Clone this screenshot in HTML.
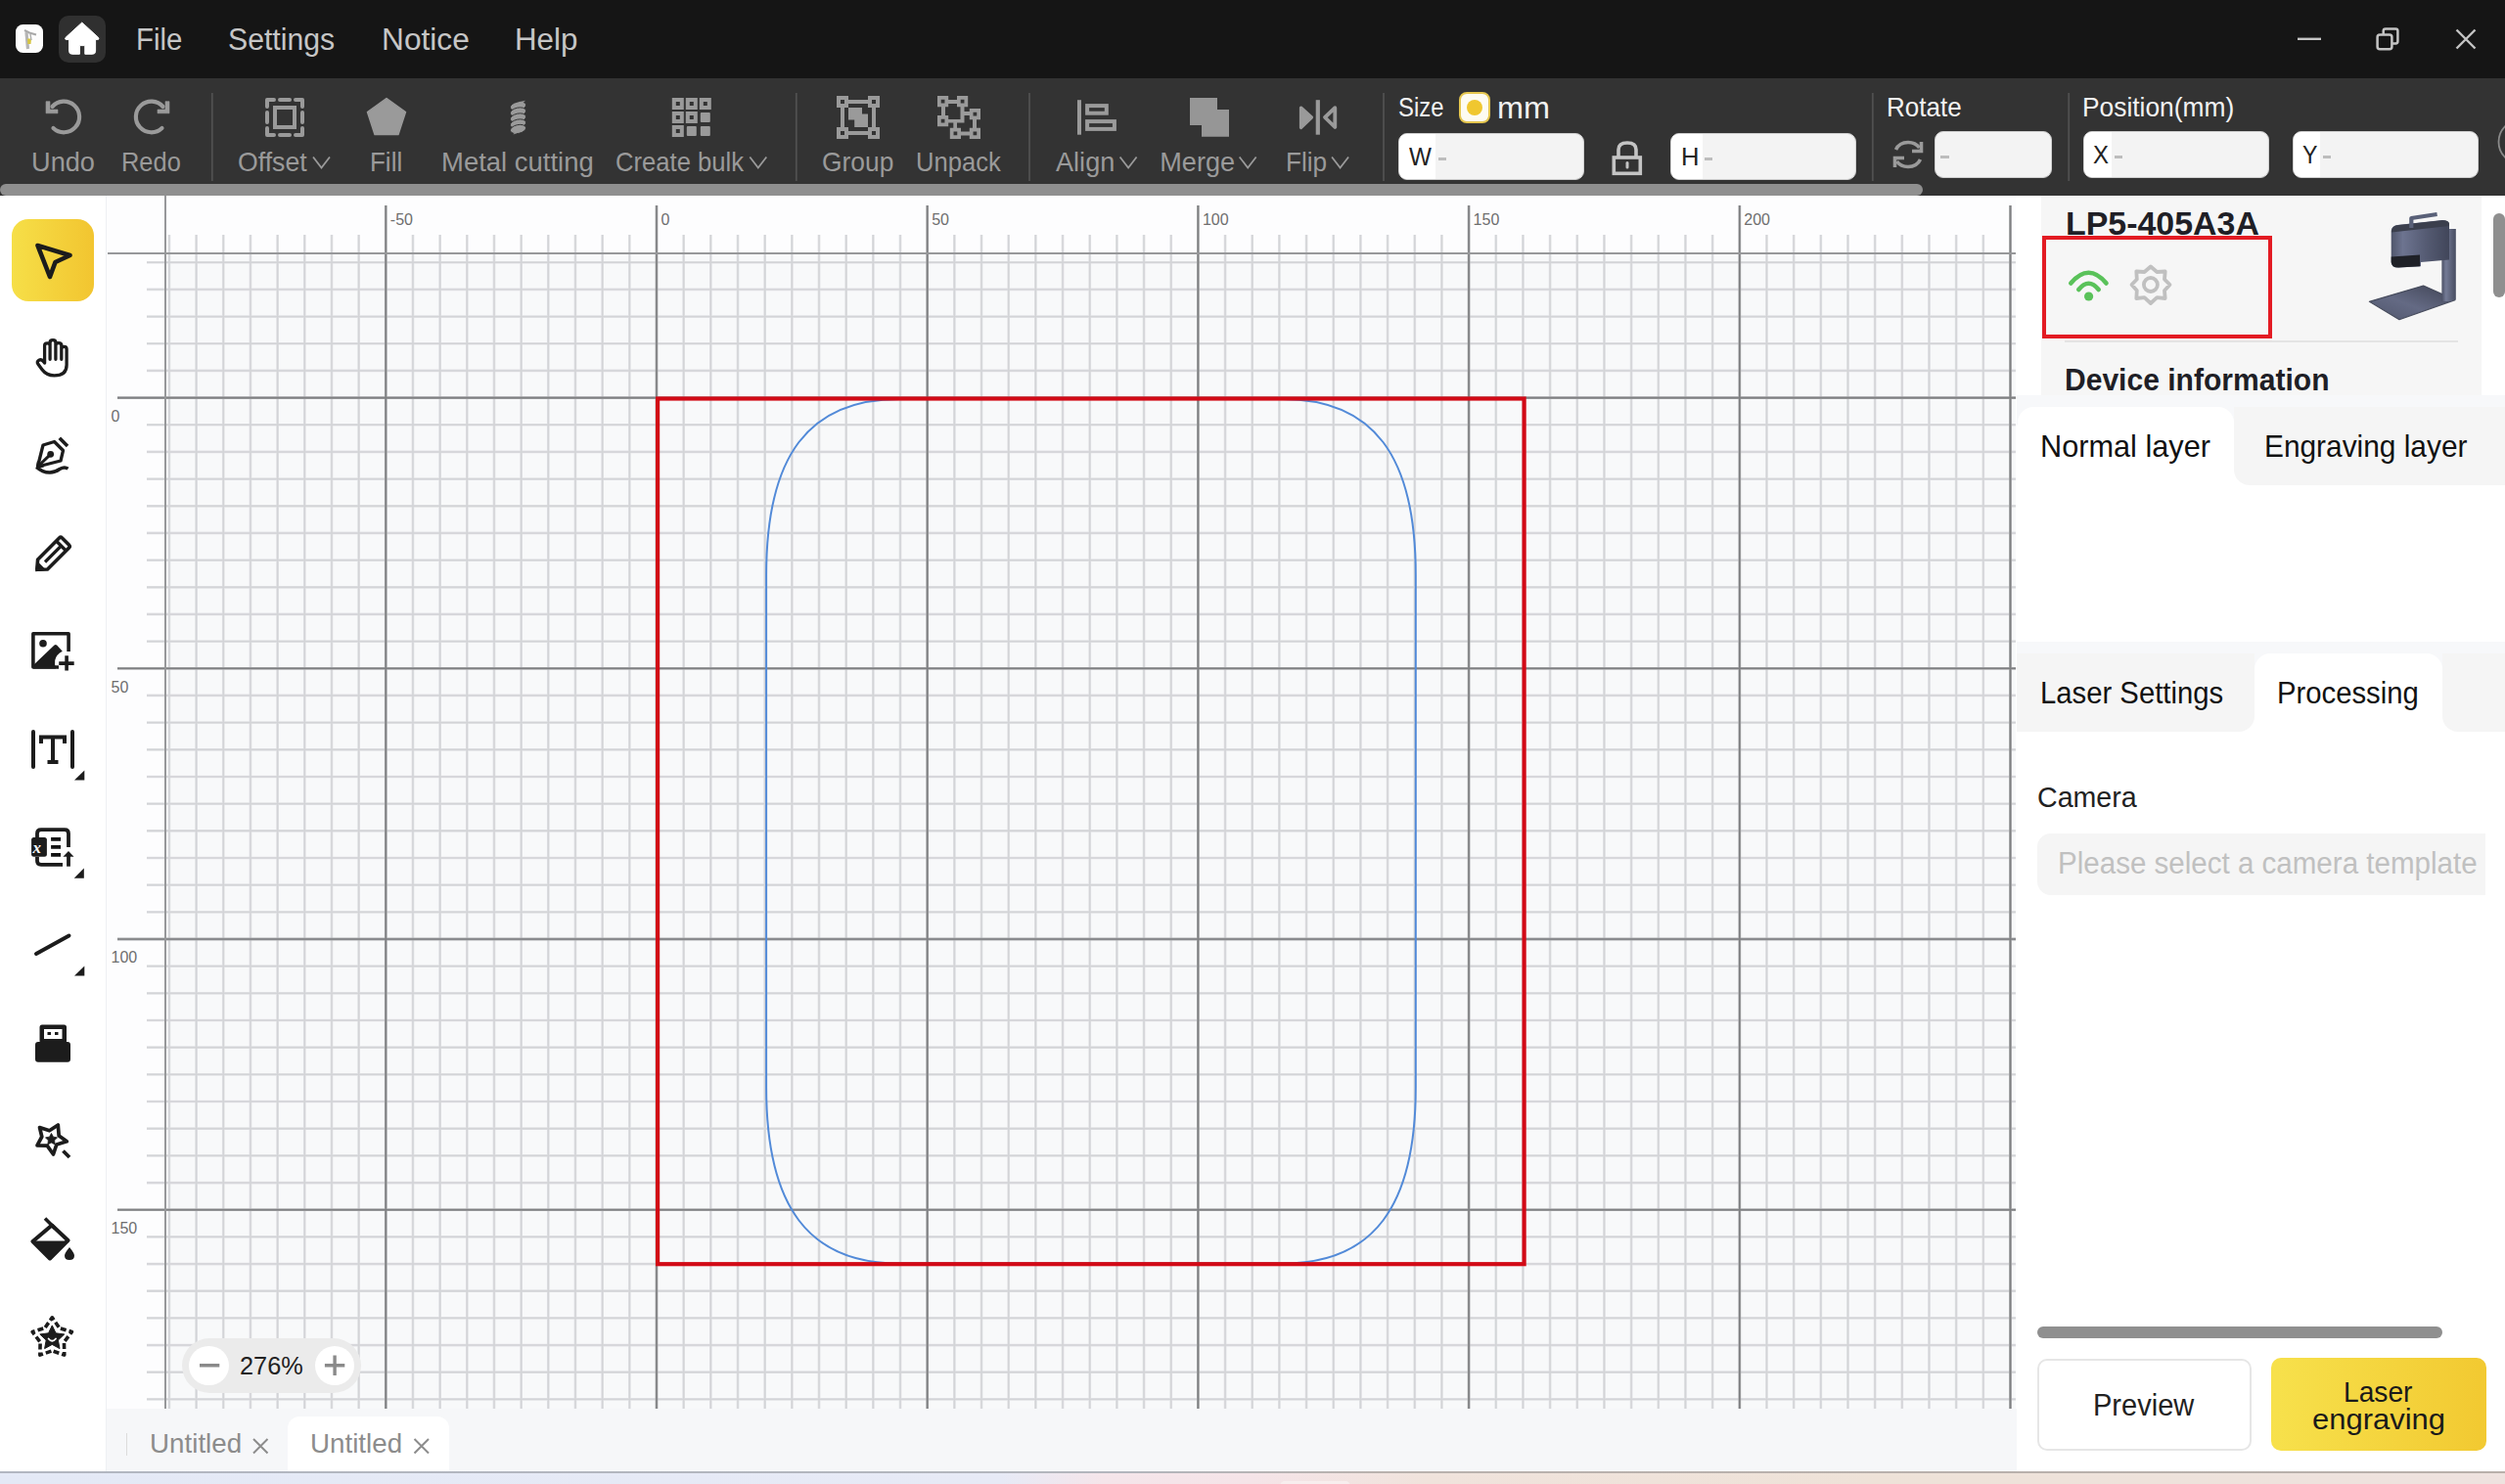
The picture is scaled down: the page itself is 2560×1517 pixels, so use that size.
<!DOCTYPE html><html><head><meta charset="utf-8"><style>
html,body{margin:0;padding:0;width:2560px;height:1517px;overflow:hidden;background:#fff;font-family:"Liberation Sans",sans-serif}
.abs{position:absolute;display:block}
.t{position:absolute;white-space:nowrap;transform-origin:0 0}
.box{position:absolute;box-sizing:border-box}
</style></head><body>
<div class="box" style="left:0;top:0;width:2560px;height:80px;background:#151515"></div>
<div class="abs" style="left:15.6px;top:25.3px;width:28.6px;height:29.1px;border-radius:7.5px;background:#fdfdfd"></div>
<svg class="abs" style="left:15px;top:25px" width="30" height="30" viewBox="15 25 30 30"><path d="M25 31L30 33.5L37 35.5" stroke="#a8a8a8" stroke-width="2.2" fill="none"/><path d="M27 33L28.5 50" stroke="#b5b5b5" stroke-width="3.2"/><path d="M28 39.5H32L31.5 45H28.3Z" fill="#d6c542"/><path d="M31 35L32 41" stroke="#b0b0b0" stroke-width="1.5"/></svg>
<div class="abs" style="left:59.8px;top:15.9px;width:48px;height:48.3px;border-radius:10px;background:#303030"></div>
<svg class="abs" style="left:60px;top:16px" width="48" height="48" viewBox="60 16 48 48"><path d="M83.8 23L100.5 38.3Q102 40.5 99.5 40.5H97.6V52.3Q97.6 55.3 94.6 55.3H86.8V46.6H81.4V55.3H73.6Q70.6 55.3 70.6 52.3V40.5H68.1Q65.6 40.5 67.1 38.3Z" fill="#ffffff" stroke="#fff" stroke-width="1" stroke-linejoin="round"/></svg>
<svg class="abs" style="left:2340px;top:20px" width="200" height="40" viewBox="2340 20 200 40"><path d="M2348 39.8H2372" stroke="#c4c4c4" stroke-width="2.4"/><path d="M2435.7 35V31.6Q2435.7 29.4 2437.9 29.4H2448.2Q2450.4 29.4 2450.4 31.6V42.3Q2450.4 44.5 2448.2 44.5H2444.5" stroke="#c4c4c4" stroke-width="2.5" fill="none"/><rect x="2429.6" y="35.5" width="14.8" height="14.8" rx="2.5" stroke="#c4c4c4" stroke-width="2.5" fill="none"/><path d="M2510.5 30.5L2529.5 49.5M2529.5 30.5L2510.5 49.5" stroke="#c4c4c4" stroke-width="2.4"/></svg>
<div class="t" style="left:139.17px;top:26.00px;font-size:30.87px;line-height:30.87px;color:#c6c6c6;transform:scaleX(0.9533);">File</div>
<div class="t" style="left:233.44px;top:26.00px;font-size:30.87px;line-height:30.87px;color:#c6c6c6;transform:scaleX(0.9794);">Settings</div>
<div class="t" style="left:389.89px;top:26.00px;font-size:30.87px;line-height:30.87px;color:#c6c6c6;transform:scaleX(1.0266);">Notice</div>
<div class="t" style="left:525.62px;top:26.00px;font-size:30.87px;line-height:30.87px;color:#c6c6c6;transform:scaleX(1.0142);">Help</div>
<div class="box" style="left:0;top:80px;width:2560px;height:120px;background:#333333"></div>
<div class="box" style="left:0;top:188px;width:1965px;height:12px;border-radius:6px;background:#8f8f8f"></div>
<div class="box" style="left:1429px;top:135.9px;width:189.79999999999995px;height:47.900000000000006px;border-radius:9px;background:#f3f3f3;border:1.5px solid #cfcfcf;overflow:hidden"><div class="box" style="left:0;top:0;width:37.40000000000009px;height:100%;background:#fff"></div></div>
<div class="box" style="left:1707.2px;top:135.9px;width:189.79999999999995px;height:47.900000000000006px;border-radius:9px;background:#f3f3f3;border:1.5px solid #cfcfcf;overflow:hidden"><div class="box" style="left:0;top:0;width:31.399999999999864px;height:100%;background:#fff"></div></div>
<div class="box" style="left:1976.6px;top:134.1px;width:120.20000000000027px;height:47.900000000000006px;border-radius:9px;background:#f3f3f3;border:1.5px solid #cfcfcf;overflow:hidden"></div>
<div class="box" style="left:2128.9px;top:133.8px;width:189.79999999999973px;height:48.0px;border-radius:9px;background:#f3f3f3;border:1.5px solid #cfcfcf;overflow:hidden"><div class="box" style="left:0;top:0;width:28.5px;height:100%;background:#fff"></div></div>
<div class="box" style="left:2343px;top:133.8px;width:190px;height:48.0px;border-radius:9px;background:#f3f3f3;border:1.5px solid #cfcfcf;overflow:hidden"><div class="box" style="left:0;top:0;width:27.40000000000009px;height:100%;background:#fff"></div></div>
<svg class="abs" style="left:0;top:0" width="2560" height="200" viewBox="0 0 2560 200"><path d="M54.5 131A15.8 15.8 0 1 0 53.5 109" stroke="#9a9a9a" stroke-width="4.2" fill="none" stroke-linecap="round"/><path d="M47 103.7H51V112H59V115.8H47Z" fill="#9a9a9a" stroke="#9a9a9a" stroke-width="0.6" stroke-linejoin="round"/><path d="M165.5 131A15.8 15.8 0 1 1 166.5 109" stroke="#9a9a9a" stroke-width="4.2" fill="none" stroke-linecap="round"/><path d="M173 103.7H169V112H161V115.8H173Z" fill="#9a9a9a" stroke="#9a9a9a" stroke-width="0.6" stroke-linejoin="round"/><path d="M273 109V102H280M302 102H309V109M309 131V138H302M280 138H273V131M286 102H296M286 138H296M273 115V125M309 115V125" stroke="#9a9a9a" stroke-width="4" fill="none" stroke-linecap="round" stroke-linejoin="round"/><rect x="281" y="110" width="20" height="20" stroke="#9a9a9a" stroke-width="4" fill="none"/><path d="M395 100.5L414.5 114.5L407 137.5H383L375.5 114.5Z" fill="#9a9a9a" stroke="#9a9a9a" stroke-width="1.5" stroke-linejoin="round"/><ellipse cx="529.5" cy="108.5" rx="8.2" ry="4.4" transform="rotate(-12 529.5 108.5)" fill="#9a9a9a" stroke="#323232" stroke-width="0.9"/><ellipse cx="529.5" cy="114.5" rx="8.2" ry="4.4" transform="rotate(-12 529.5 114.5)" fill="#9a9a9a" stroke="#323232" stroke-width="0.9"/><ellipse cx="529.5" cy="120.5" rx="8.2" ry="4.4" transform="rotate(-12 529.5 120.5)" fill="#9a9a9a" stroke="#323232" stroke-width="0.9"/><ellipse cx="529.5" cy="126.5" rx="8.2" ry="4.4" transform="rotate(-12 529.5 126.5)" fill="#9a9a9a" stroke="#323232" stroke-width="0.9"/><ellipse cx="529.5" cy="132" rx="8.2" ry="4.4" transform="rotate(-12 529.5 132)" fill="#9a9a9a" stroke="#323232" stroke-width="0.9"/><path d="M529 104.5L537 102.8L533.5 106Z" fill="#9a9a9a"/><path d="M530 135.5L524.5 137.5L527 134Z" fill="#9a9a9a"/><path d="M686.8 99.9h12v12h-12zM690.8 103.9v4h4v-4z" fill="#9a9a9a" fill-rule="evenodd"/><path d="M686.8 113.9h12v12h-12zM690.8 117.9v4h4v-4z" fill="#9a9a9a" fill-rule="evenodd"/><path d="M686.8 127.9h12v12h-12zM690.8 131.9v4h4v-4z" fill="#9a9a9a" fill-rule="evenodd"/><path d="M700.8 99.9h12v12h-12zM704.8 103.9v4h4v-4z" fill="#9a9a9a" fill-rule="evenodd"/><path d="M700.8 113.9h12v12h-12zM704.8 117.9v4h4v-4z" fill="#9a9a9a" fill-rule="evenodd"/><rect x="701.8" y="128.9" width="10" height="10" rx="1" fill="#9a9a9a"/><path d="M714.8 99.9h12v12h-12zM718.8 103.9v4h4v-4z" fill="#9a9a9a" fill-rule="evenodd"/><rect x="715.8" y="114.9" width="10" height="10" rx="1" fill="#9a9a9a"/><rect x="715.8" y="128.9" width="10" height="10" rx="1" fill="#9a9a9a"/><path d="M855 98h12v12h-12zM859.00 102.00v4.00h4.00v-4.00zM887 98h12v12h-12zM891.00 102.00v4.00h4.00v-4.00zM855 130h12v12h-12zM859.00 134.00v4.00h4.00v-4.00zM887 130h12v12h-12zM891.00 134.00v4.00h4.00v-4.00z" fill="#9a9a9a" fill-rule="evenodd"/><path d="M867 102H887V106H867ZM867 134H887V138H867ZM859 110H863V130H859ZM891 110H895V130H891Z" fill="#9a9a9a"/><path d="M867 110H881V116.5H887V130H873.2V122.6H867Z" fill="#9a9a9a"/><path d="M958 98h11.2v11.2h-11.2zM961.73 101.73v3.73h3.73v-3.73zM978 98h11.2v11.2h-11.2zM981.73 101.73v3.73h3.73v-3.73zM958 118h11.2v11.2h-11.2zM961.73 121.73v3.73h3.73v-3.73zM990.8 111h11.2v11.2h-11.2zM994.53 114.73v3.73h3.73v-3.73zM970.8 130.8h11.2v11.2h-11.2zM974.53 134.53v3.73h3.73v-3.73zM990.8 130.8h11.2v11.2h-11.2zM994.53 134.53v3.73h3.73v-3.73z" fill="#9a9a9a" fill-rule="evenodd"/><path d="M969 102H978V106H969ZM962 109H966V118H962ZM981.5 109H985.5V125.5H981.5ZM969 122H985.5V125.5H969ZM985.5 114H991V118H985.5ZM994 122H998V131H994ZM982 134.5H991V138.5H982ZM974.3 125.5H978V131H974.3Z" fill="#9a9a9a"/><rect x="1101" y="102.2" width="4" height="35.5" fill="#9a9a9a"/><rect x="1111.1" y="108.1" width="19.7" height="7.6" stroke="#9a9a9a" stroke-width="4" fill="none"/><rect x="1111.1" y="124.1" width="27.8" height="7.8" stroke="#9a9a9a" stroke-width="4" fill="none"/><path d="M1216 100H1244V112H1256V139.7H1228V128H1216Z" fill="#969696"/><path d="M1329.5 110L1340.5 120L1329.5 130.5Z" fill="#9a9a9a" stroke="#9a9a9a" stroke-width="3.2" stroke-linejoin="round"/><path d="M1346.8 102.2V137.7" stroke="#9a9a9a" stroke-width="4.2"/><path d="M1364.3 110.2L1354 120L1364.3 130Z" fill="none" stroke="#9a9a9a" stroke-width="3.8" stroke-linejoin="round"/><path d="M320 160.5L328.5 171.5L337 160.5" stroke="#9a9a9a" stroke-width="1.8" fill="none"/><path d="M766.3 160.5L774.8 171.5L783.3 160.5" stroke="#9a9a9a" stroke-width="1.8" fill="none"/><path d="M1144.6 160.5L1153.1 171.5L1161.6 160.5" stroke="#9a9a9a" stroke-width="1.8" fill="none"/><path d="M1266.7 160.5L1275.2 171.5L1283.7 160.5" stroke="#9a9a9a" stroke-width="1.8" fill="none"/><path d="M1361.1 160.5L1369.6 171.5L1378.1 160.5" stroke="#9a9a9a" stroke-width="1.8" fill="none"/><path d="M1654 160V153Q1654 146 1663 146Q1672 146 1672 153V160" stroke="#c4c4c4" stroke-width="3.6" fill="none"/><rect x="1649.3" y="161" width="27" height="16.3" stroke="#c4c4c4" stroke-width="3.6" fill="none"/><path d="M1663 166.5V171" stroke="#c4c4c4" stroke-width="3" stroke-linecap="round"/><path d="M1937.5 153Q1941 145.5 1950 145.5Q1957.5 145.5 1961.5 151" stroke="#9a9a9a" stroke-width="3.6" fill="none"/><path d="M1963.5 145V154.5H1954" stroke="#9a9a9a" stroke-width="3.6" fill="none"/><path d="M1962.5 163Q1959 170.5 1950 170.5Q1942.5 170.5 1938.5 165" stroke="#9a9a9a" stroke-width="3.6" fill="none"/><path d="M1936.5 171V161.5H1946" stroke="#9a9a9a" stroke-width="3.6" fill="none"/><path d="M216.8 95V185M813.8 95V185M1052 95V185M1414 95V185M1913.8 95V185M2114.2 95V185" stroke="#505050" stroke-width="1.8"/><circle cx="2576" cy="145" r="22.5" stroke="#8a8a8a" stroke-width="1.8" fill="none"/></svg>
<div class="t" style="left:32.29px;top:152.00px;font-size:27.10px;line-height:27.10px;color:#9a9a9a;transform:scaleX(1.0034);">Undo</div>
<div class="t" style="left:124.30px;top:152.00px;font-size:27.10px;line-height:27.10px;color:#9a9a9a;transform:scaleX(0.9389);">Redo</div>
<div class="t" style="left:243.33px;top:152.00px;font-size:27.10px;line-height:27.10px;color:#9a9a9a;transform:scaleX(0.9840);">Offset</div>
<div class="t" style="left:378.16px;top:152.00px;font-size:27.10px;line-height:27.10px;color:#9a9a9a;transform:scaleX(0.9589);">Fill</div>
<div class="t" style="left:450.73px;top:152.00px;font-size:27.10px;line-height:27.10px;color:#9a9a9a;transform:scaleX(1.0136);">Metal cutting</div>
<div class="t" style="left:629.32px;top:152.00px;font-size:27.10px;line-height:27.10px;color:#9a9a9a;transform:scaleX(0.9456);">Create bulk</div>
<div class="t" style="left:839.88px;top:152.00px;font-size:27.10px;line-height:27.10px;color:#9a9a9a;transform:scaleX(0.9734);">Group</div>
<div class="t" style="left:936.02px;top:152.00px;font-size:27.10px;line-height:27.10px;color:#9a9a9a;transform:scaleX(0.9446);">Unpack</div>
<div class="t" style="left:1079.03px;top:152.00px;font-size:27.10px;line-height:27.10px;color:#9a9a9a;">Align</div>
<div class="t" style="left:1185.26px;top:152.00px;font-size:27.10px;line-height:27.10px;color:#9a9a9a;">Merge</div>
<div class="t" style="left:1314.04px;top:152.00px;font-size:27.10px;line-height:27.10px;color:#9a9a9a;transform:scaleX(0.9649);">Flip</div>
<div class="t" style="left:1429.13px;top:96.00px;font-size:27.25px;line-height:27.25px;color:#f2f2f2;transform:scaleX(0.8753);">Size</div>
<div class="t" style="left:1530.41px;top:95.00px;font-size:31.00px;line-height:31.00px;color:#f2f2f2;transform:scaleX(1.0462);">mm</div>
<div class="t" style="left:1928.36px;top:96.00px;font-size:27.25px;line-height:27.25px;color:#f2f2f2;transform:scaleX(0.9540);">Rotate</div>
<div class="t" style="left:2127.93px;top:96.00px;font-size:27.25px;line-height:27.25px;color:#f2f2f2;transform:scaleX(0.9668);">Position(mm)</div>
<div class="box" style="left:1491px;top:94px;width:32px;height:32px;border-radius:8px;background:#fdfbf2;border:2px solid #e6c750"></div>
<div class="box" style="left:1499px;top:102px;width:16px;height:16px;border-radius:8px;background:#f0c72f"></div>
<div class="t" style="left:1440.28px;top:148.00px;font-size:25.07px;line-height:25.07px;color:#222;transform:scaleX(0.9683);">W</div>
<div class="t" style="left:1717.68px;top:148.00px;font-size:25.07px;line-height:25.07px;color:#222;transform:scaleX(1.0230);">H</div>
<div class="t" style="left:2139.06px;top:146.00px;font-size:25.07px;line-height:25.07px;color:#222;transform:scaleX(0.9547);">X</div>
<div class="t" style="left:2352.88px;top:146.00px;font-size:25.07px;line-height:25.07px;color:#222;transform:scaleX(0.9226);">Y</div>
<div class="box" style="left:1470px;top:161.3px;width:8.299999999999955px;height:2.4px;background:#bdbdbd"></div>
<div class="box" style="left:1741.9px;top:161.3px;width:8.399999999999864px;height:2.4px;background:#bdbdbd"></div>
<div class="box" style="left:1983.2px;top:159.3px;width:9.0px;height:2.4px;background:#bdbdbd"></div>
<div class="box" style="left:2161.2px;top:159.20000000000002px;width:8.100000000000364px;height:2.4px;background:#bdbdbd"></div>
<div class="box" style="left:2373.7px;top:159.20000000000002px;width:8.800000000000182px;height:2.4px;background:#bdbdbd"></div>
<div class="box" style="left:0;top:200px;width:109px;height:1304px;background:#fff;border-right:1px solid #eef0f3"></div>
<svg class="abs" style="left:0;top:200px" width="108" height="1304" viewBox="0 200 108 1304"><defs><linearGradient id="yg" x1="0" x2="1" y1="0" y2="0"><stop offset="0" stop-color="#f6df48"/><stop offset="1" stop-color="#f2c530"/></linearGradient></defs><rect x="12" y="224" width="84" height="84" rx="17" fill="url(#yg)"/><path d="M38.5 251L71.5 261L56.5 268L51 283Z" stroke="#1c1c1c" stroke-width="4.6" fill="none" stroke-linejoin="round"/><path d="M45.6 371V353.3Q45.6 350.8 48.35 350.8Q51.1 350.8 51.1 353.3V367.3M51.1 353V350.2Q51.1 347.7 54 347.7Q56.9 347.7 56.9 350.2V367.3M56.9 353Q56.9 350.6 59.85 350.6Q62.8 350.6 62.8 353V367.3M62.8 357Q62.8 354.4 65.45 354.4Q68.1 354.4 68.1 357V373Q68.1 383.9 55.5 383.9Q47.5 383.9 42.8 377.5L38.8 372Q37.3 369.5 39.8 368.2Q42.2 367 44 369.2L45.6 371" stroke="#1c1c1c" stroke-width="3.3" fill="none" stroke-linecap="round" stroke-linejoin="round"/><path d="M38.5 477L44 455L55.5 451.5L64.5 460.5L62 471Z" stroke="#1c1c1c" stroke-width="3.3" fill="none" stroke-linejoin="round"/><path d="M38.5 477L51.7 464.3" stroke="#1c1c1c" stroke-width="3"/><circle cx="51.7" cy="464.3" r="3.4" fill="#1c1c1c"/><path d="M36.5 479.5L38 471L45 477.5Z" fill="#1c1c1c"/><path d="M60.8 447.8L69 456" stroke="#1c1c1c" stroke-width="3.6"/><path d="M37.5 477.5Q43 483 51 483Q56 483 61 479.5Q66 476.5 69.5 479.2" stroke="#1c1c1c" stroke-width="3.4" fill="none"/><path d="M37.8 582.2L38.6 572L60.5 550Q62 548.5 63.5 550L70.5 557Q72 558.5 70.5 560L48.5 582Z" stroke="#1c1c1c" stroke-width="3.6" fill="none" stroke-linejoin="round"/><path d="M57.5 553L67.5 563" stroke="#1c1c1c" stroke-width="3.4"/><path d="M46 574.5L61.5 559" stroke="#1c1c1c" stroke-width="3.2"/><path d="M36.2 584.2L37.5 573L47.5 583Z" fill="#1c1c1c"/><path d="M60 682H33.9V647.7H70.1V666" stroke="#1c1c1c" stroke-width="3.6" fill="none" stroke-linejoin="round"/><circle cx="44" cy="657.8" r="3.8" fill="#1c1c1c"/><path d="M34 680L55.5 659.6Q56.8 658.4 58.1 659.6L63.8 665.8Q57.5 669 56.2 675Q55.6 679 57 683.5H34Z" fill="#1c1c1c"/><path d="M68.1 670.2V685.5M60.2 678.1H75.7" stroke="#1c1c1c" stroke-width="3.6"/><path d="M34 748V784M74 748V784" stroke="#1c1c1c" stroke-width="4" stroke-linecap="round"/><path d="M42 760V753.5H66V760M54 753.5V779M48.5 779H59.5" stroke="#1c1c1c" stroke-width="4" fill="none"/><path d="M76 797.5L86.3 787.5V797.5Z" fill="#1c1c1c"/><path d="M38 856V852Q38 848.1 42 848.1H66Q70 848.1 70 852V866M38 876V880Q38 883.8 42 883.8H64" stroke="#1c1c1c" stroke-width="3.8" fill="none"/><rect x="32.1" y="856" width="15.8" height="19.8" rx="2.5" fill="#1c1c1c"/><text x="33.6" y="871.5" style="font-family:&quot;Liberation Serif&quot;,serif;font-style:italic;font-weight:bold;font-size:17px" fill="#fff">x</text><path d="M52.1 857.9H62M52.1 865.9H62M52.1 873.9H62" stroke="#111" stroke-width="3.6"/><path d="M70 885.7V874" stroke="#1c1c1c" stroke-width="3.8"/><path d="M64.4 875.8H75.5L70 870.1Z" fill="#1c1c1c"/><path d="M75.7 897.7L85.8 887.6V897.7Z" fill="#1c1c1c"/><path d="M37 975L70.5 956.5" stroke="#1c1c1c" stroke-width="4" stroke-linecap="round"/><path d="M76 997.5L86.3 987.6V997.5Z" fill="#1c1c1c"/><rect x="40.5" y="1047.5" width="27.5" height="19" rx="2.5" fill="#1c1c1c"/><rect x="45" y="1052" width="18.5" height="10" fill="#fff"/><rect x="48.5" y="1055" width="3.5" height="3" fill="#1c1c1c"/><rect x="56" y="1055" width="3.5" height="3" fill="#1c1c1c"/><rect x="36" y="1065" width="36" height="20.7" rx="3" fill="#1c1c1c"/><path d="M40.5 1152.5L50.5 1155.8L59.3 1150L60.2 1161L68.3 1166.8L57.8 1170L54.5 1180L48.2 1171.2L38 1170.8L42.8 1162Z" stroke="#1c1c1c" stroke-width="3.7" fill="none" stroke-linejoin="round"/><path d="M52.50 1158.50L54.44 1162.13L58.49 1162.85L55.64 1165.82L56.20 1169.90L52.50 1168.10L48.80 1169.90L49.36 1165.82L46.51 1162.85L50.56 1162.13Z" fill="#1c1c1c" stroke="#1c1c1c" stroke-width="0.8"/><path d="M64.5 1176.5L71 1183" stroke="#1c1c1c" stroke-width="3.8"/><path d="M46 1245.5L56 1255.5" stroke="#1c1c1c" stroke-width="3.6"/><path d="M53 1252.5L69.5 1268L51 1286.5L33.5 1269Z" stroke="#1c1c1c" stroke-width="4" fill="none" stroke-linejoin="round"/><path d="M35 1268.5H68.5L51 1286Z" fill="#1c1c1c"/><path d="M71 1275Q76 1281 76 1283.5Q76 1288 71 1288Q66 1288 66 1283.5Q66 1281 71 1275Z" fill="#1c1c1c"/><path d="M53.30 1346.80L60.82 1357.64L73.46 1361.45L65.47 1371.96L65.76 1385.15L53.30 1380.80L40.84 1385.15L41.13 1371.96L33.14 1361.45L45.78 1357.64Z" stroke="#1c1c1c" stroke-width="3.6" fill="none" stroke-dasharray="6 3 6 2.3 6 3" stroke-dashoffset="3" stroke-linejoin="round"/><path d="M53.30 1354.90L57.06 1362.82L65.76 1363.95L59.39 1369.98L61.00 1378.60L53.30 1374.40L45.60 1378.60L47.21 1369.98L40.84 1363.95L49.54 1362.82Z" fill="#1c1c1c" stroke="#1c1c1c" stroke-width="1" stroke-linejoin="round"/><path d="M49.6 1368.5Q53.3 1373 57 1368.5" stroke="#fff" stroke-width="1.8" fill="none" stroke-linecap="round"/></svg>
<svg class="abs" style="left:0;top:0" width="2560" height="1517" viewBox="0 0 2560 1517">
<defs><clipPath id="cc"><rect x="109" y="200" width="1951" height="1240"/></clipPath></defs>
<g clip-path="url(#cc)">
<rect x="109" y="200" width="1951" height="1240" fill="#fdfdfe"/>
<rect x="169" y="259" width="1891" height="1181" fill="#f8f9fa"/>
<path d="M172.94 240V1440M200.61 240V1440M228.28 240V1440M255.95 240V1440M283.62 240V1440M311.29 240V1440M338.96 240V1440M366.63 240V1440M421.97 240V1440M449.64 240V1440M477.31 240V1440M504.98 240V1440M532.65 240V1440M560.32 240V1440M587.99 240V1440M615.66 240V1440M643.33 240V1440M698.67 240V1440M726.34 240V1440M754.01 240V1440M781.68 240V1440M809.35 240V1440M837.02 240V1440M864.69 240V1440M892.36 240V1440M920.03 240V1440M975.37 240V1440M1003.04 240V1440M1030.71 240V1440M1058.38 240V1440M1086.05 240V1440M1113.72 240V1440M1141.39 240V1440M1169.06 240V1440M1196.73 240V1440M1252.07 240V1440M1279.74 240V1440M1307.41 240V1440M1335.08 240V1440M1362.75 240V1440M1390.42 240V1440M1418.09 240V1440M1445.76 240V1440M1473.43 240V1440M1528.77 240V1440M1556.44 240V1440M1584.11 240V1440M1611.78 240V1440M1639.45 240V1440M1667.12 240V1440M1694.79 240V1440M1722.46 240V1440M1750.13 240V1440M1805.47 240V1440M1833.14 240V1440M1860.81 240V1440M1888.48 240V1440M1916.15 240V1440M1943.82 240V1440M1971.49 240V1440M1999.16 240V1440M2026.83 240V1440M150 268.25H2060M150 295.92H2060M150 323.59H2060M150 351.26H2060M150 378.93H2060M150 434.27H2060M150 461.94H2060M150 489.61H2060M150 517.28H2060M150 544.95H2060M150 572.62H2060M150 600.29H2060M150 627.96H2060M150 655.63H2060M150 710.97H2060M150 738.64H2060M150 766.31H2060M150 793.98H2060M150 821.65H2060M150 849.32H2060M150 876.99H2060M150 904.66H2060M150 932.33H2060M150 987.67H2060M150 1015.34H2060M150 1043.01H2060M150 1070.68H2060M150 1098.35H2060M150 1126.02H2060M150 1153.69H2060M150 1181.36H2060M150 1209.03H2060M150 1264.37H2060M150 1292.04H2060M150 1319.71H2060M150 1347.38H2060M150 1375.05H2060M150 1402.72H2060M150 1430.39H2060" stroke="#e1e2e5" stroke-width="2.7" fill="none"/>
<path d="M172.94 240V1440M200.61 240V1440M228.28 240V1440M255.95 240V1440M283.62 240V1440M311.29 240V1440M338.96 240V1440M366.63 240V1440M421.97 240V1440M449.64 240V1440M477.31 240V1440M504.98 240V1440M532.65 240V1440M560.32 240V1440M587.99 240V1440M615.66 240V1440M643.33 240V1440M698.67 240V1440M726.34 240V1440M754.01 240V1440M781.68 240V1440M809.35 240V1440M837.02 240V1440M864.69 240V1440M892.36 240V1440M920.03 240V1440M975.37 240V1440M1003.04 240V1440M1030.71 240V1440M1058.38 240V1440M1086.05 240V1440M1113.72 240V1440M1141.39 240V1440M1169.06 240V1440M1196.73 240V1440M1252.07 240V1440M1279.74 240V1440M1307.41 240V1440M1335.08 240V1440M1362.75 240V1440M1390.42 240V1440M1418.09 240V1440M1445.76 240V1440M1473.43 240V1440M1528.77 240V1440M1556.44 240V1440M1584.11 240V1440M1611.78 240V1440M1639.45 240V1440M1667.12 240V1440M1694.79 240V1440M1722.46 240V1440M1750.13 240V1440M1805.47 240V1440M1833.14 240V1440M1860.81 240V1440M1888.48 240V1440M1916.15 240V1440M1943.82 240V1440M1971.49 240V1440M1999.16 240V1440M2026.83 240V1440M150 268.25H2060M150 295.92H2060M150 323.59H2060M150 351.26H2060M150 378.93H2060M150 434.27H2060M150 461.94H2060M150 489.61H2060M150 517.28H2060M150 544.95H2060M150 572.62H2060M150 600.29H2060M150 627.96H2060M150 655.63H2060M150 710.97H2060M150 738.64H2060M150 766.31H2060M150 793.98H2060M150 821.65H2060M150 849.32H2060M150 876.99H2060M150 904.66H2060M150 932.33H2060M150 987.67H2060M150 1015.34H2060M150 1043.01H2060M150 1070.68H2060M150 1098.35H2060M150 1126.02H2060M150 1153.69H2060M150 1181.36H2060M150 1209.03H2060M150 1264.37H2060M150 1292.04H2060M150 1319.71H2060M150 1347.38H2060M150 1375.05H2060M150 1402.72H2060M150 1430.39H2060" stroke="#d3d4d7" stroke-width="1.4" fill="none"/>
<path d="M394.30 210V1440M671.00 210V1440M947.70 210V1440M1224.40 210V1440M1501.10 210V1440M1777.80 210V1440M2054.50 210V1440M120 406.60H2060M120 683.30H2060M120 960.00H2060M120 1236.70H2060" stroke="#aeafb1" stroke-width="2.8" fill="none"/>
<path d="M394.30 210V1440M671.00 210V1440M947.70 210V1440M1224.40 210V1440M1501.10 210V1440M1777.80 210V1440M2054.50 210V1440M120 406.60H2060M120 683.30H2060M120 960.00H2060M120 1236.70H2060" stroke="#7f8082" stroke-width="1.6" fill="none"/>
<path d="M169 200V1440M110 259H2060" stroke="#97989a" stroke-width="2" fill="none"/>
<g style="font-family:&quot;Liberation Sans&quot;,sans-serif;font-size:16px" fill="#6e6e6e"><text x="398.8" y="229.5">-50</text><text x="675.5" y="229.5">0</text><text x="952.2" y="229.5">50</text><text x="1228.9" y="229.5">100</text><text x="1505.6" y="229.5">150</text><text x="1782.3" y="229.5">200</text><text x="113.5" y="430.8">0</text><text x="113.5" y="707.5">50</text><text x="113.5" y="984.2">100</text><text x="113.5" y="1260.9">150</text></g>
<path d="M919.1 407.9H1310.8C1403.3 407.9 1446.8 465.5 1446.8 587.9V1111.6C1446.8 1234.0 1403.3 1291.6 1310.8 1291.6H919.1C826.6 1291.6 783.1 1234.0 783.1 1111.6V587.9C783.1 465.5 826.6 407.9 919.1 407.9Z" fill="none" stroke="#528ad8" stroke-width="2.0"/>
<rect x="672.1" y="407.5" width="885.5" height="884.7" fill="none" stroke="#d20a16" stroke-width="4.2"/>
</g></svg>
<div class="box" style="left:186px;top:1367.6px;width:183.2px;height:56.7px;border-radius:28.4px;background:#ebebeb"></div>
<div class="box" style="left:193.4px;top:1375.5px;width:40.4px;height:40.4px;border-radius:50%;background:#fff"></div>
<div class="box" style="left:321.9px;top:1375.5px;width:40.4px;height:40.4px;border-radius:50%;background:#fff"></div>
<svg class="abs" style="left:190px;top:1370px" width="180" height="50" viewBox="190 1370 180 50"><path d="M204 1395.7H224.3M331.9 1395.7H352.3M342.1 1385.5V1405.9" stroke="#8a8a8a" stroke-width="3.4"/></svg>
<div class="t" style="left:245.23px;top:1383.00px;font-size:26.67px;line-height:26.67px;color:#222;transform:scaleX(0.9494);">276%</div>
<div class="box" style="left:109px;top:1440px;width:1952px;height:64px;background:#f6f7f9"></div>
<div class="box" style="left:128.5px;top:1464.7px;width:1.5px;height:23px;background:#dcdcdc"></div>
<div class="box" style="left:293.8px;top:1447.8px;width:164.8px;height:56.5px;border-radius:12px 12px 0 0;background:#fff"></div>
<div class="t" style="left:152.85px;top:1463.00px;font-size:26.96px;line-height:26.96px;color:#8c8c8c;transform:scaleX(1.0307);">Untitled</div>
<div class="t" style="left:317.25px;top:1463.00px;font-size:26.96px;line-height:26.96px;color:#8c8c8c;transform:scaleX(1.0296);">Untitled</div>
<svg class="abs" style="left:250px;top:1460px" width="200" height="35" viewBox="250 1460 200 35"><path d="M259 1471L273.5 1485.5M273.5 1471L259 1485.5M423.5 1471L438 1485.5M438 1471L423.5 1485.5" stroke="#8c8c8c" stroke-width="2"/></svg>
<div class="box" style="left:0;top:1504px;width:2560px;height:13px;background:linear-gradient(90deg,#e4e9f6 0%,#e7eaf6 40%,#f5e5ea 44%,#f5e4e8 50%,#f0e3dc 57%,#eee2d8 75%,#eee2df 100%)"></div>
<div class="box" style="left:0;top:1503.5px;width:2560px;height:2px;background:linear-gradient(90deg,#b2b7c1 0%,#b3b6bd 45%,#b9b2ae 55%,#b8b0ab 100%)"></div>
<div class="box" style="left:1308px;top:1514px;width:72px;height:10px;border-radius:6px;background:#f8eeee"></div>
<div class="box" style="left:2061px;top:200px;width:499px;height:1304px;background:#fff"></div>
<div class="box" style="left:2086px;top:200px;width:450px;height:204px;background:#f6f6f6"></div>
<div class="box" style="left:2548px;top:218px;width:12px;height:86px;border-radius:6px;background:#8f8f8f"></div>
<div class="t" style="left:2110.61px;top:213.00px;font-size:32.61px;line-height:32.61px;color:#1f1f26;font-weight:bold;transform:scaleX(1.0398);">LP5-405A3A</div>
<div class="box" style="left:2110.4px;top:348.2px;width:401.6px;height:1.6px;background:#e4e4e4"></div>
<div class="box" style="left:2087.1px;top:241.2px;width:234.9px;height:104.4px;border:4.6px solid #e31b23"></div>
<div class="t" style="left:2109.87px;top:373.00px;font-size:31.16px;line-height:31.16px;color:#1f1f26;font-weight:bold;transform:scaleX(0.9644);">Device information</div>
<svg class="abs" style="left:2100px;top:260px" width="140" height="60" viewBox="2100 260 140 60"><path d="M2116.3 289.5Q2134.5 268 2152.5 289.5" stroke="#5ac25a" stroke-width="4.6" fill="none" stroke-linecap="round"/><path d="M2124.3 296Q2134.5 283.5 2144.7 296" stroke="#5ac25a" stroke-width="4.6" fill="none" stroke-linecap="round"/><circle cx="2134.6" cy="303" r="4.6" fill="#5ac25a"/><path d="M2197.9 272.5L2204.3 278L2212.7 277.5L2212 285.5L2217.5 291L2212 297L2212.7 305L2204.3 304.2L2197.9 310L2191.5 304.2L2183.3 305L2183.8 297L2178.5 291L2183.8 285.5L2183.3 277.5L2191.5 278Z" stroke="#c0c0c0" stroke-width="3.8" fill="none" stroke-linejoin="round"/><circle cx="2197.9" cy="291" r="7" stroke="#c0c0c0" stroke-width="3.8" fill="none"/></svg>
<svg class="abs" style="left:2410px;top:205px" width="110" height="130" viewBox="2410 205 110 130"><defs><linearGradient id="dg" x1="0" x2="1"><stop offset="0" stop-color="#4f556b"/><stop offset="0.2" stop-color="#6d7490"/><stop offset="0.6" stop-color="#555b73"/><stop offset="1" stop-color="#41465a"/></linearGradient><linearGradient id="bg2" x1="0" x2="1" y1="1" y2="0"><stop offset="0" stop-color="#50566c"/><stop offset="0.45" stop-color="#646a84"/><stop offset="1" stop-color="#3f4354"/></linearGradient><linearGradient id="pg" x1="0" x2="1"><stop offset="0" stop-color="#4c5166"/><stop offset="0.3" stop-color="#747b96"/><stop offset="1" stop-color="#474c60"/></linearGradient></defs><path d="M2421.4 308.3L2476.6 292.1L2509 306.6L2452 326.7Z" fill="url(#bg2)" stroke="#484d5e" stroke-width="1.2" stroke-linejoin="round"/><path d="M2495.4 236L2500 233.9H2509.8V306L2505 308H2495.4Z" fill="url(#pg)"/><path d="M2443.7 236Q2444 231 2450 230L2496 225Q2502.5 225 2503 229V265.5L2474 268V272.3L2451 273.5Q2444 273.5 2443.7 268Z" fill="url(#dg)"/><path d="M2443.7 262.5L2473 260.5V272.3L2451 273.5Q2444 273.5 2443.7 268Z" fill="#1f2127"/><path d="M2444 236Q2445 230.5 2451 230L2496 225.2Q2502 225.2 2503 228.5V231L2444 237.5Z" fill="#3b3f4d"/><path d="M2464.3 233V223L2490.6 219" stroke="#596078" stroke-width="4.2" fill="none" stroke-linejoin="round"/></svg>
<div class="box" style="left:2061px;top:404px;width:499px;height:30px;background:#f7f8fa"></div>
<div class="box" style="left:2062px;top:416.4px;width:221px;height:80px;border-radius:16px 16px 0 0;background:#fff"></div>
<div class="box" style="left:2283px;top:416.4px;width:277px;height:79.5px;border-radius:0 0 0 16px;background:#f5f5f5"></div>
<div class="t" style="left:2085.17px;top:441.00px;font-size:31.59px;line-height:31.59px;color:#111;transform:scaleX(0.9717);">Normal layer</div>
<div class="t" style="left:2314.24px;top:441.00px;font-size:31.59px;line-height:31.59px;color:#111;transform:scaleX(0.9454);">Engraving layer</div>
<div class="box" style="left:2061px;top:655.9px;width:499px;height:30px;background:#f7f8fa"></div>
<div class="box" style="left:2061px;top:667.5px;width:242.5px;height:80px;border-radius:0 0 16px 0;background:#f5f5f5"></div>
<div class="box" style="left:2303.5px;top:667.5px;width:192.3px;height:80px;border-radius:16px 16px 0 0;background:#fff"></div>
<div class="box" style="left:2495.8px;top:667.5px;width:64.2px;height:80px;border-radius:0 0 0 16px;background:#f5f5f5"></div>
<div class="t" style="left:2085.28px;top:693.00px;font-size:30.43px;line-height:30.43px;color:#111;transform:scaleX(0.9624);">Laser Settings</div>
<div class="t" style="left:2327.49px;top:693.00px;font-size:30.43px;line-height:30.43px;color:#111;transform:scaleX(0.9618);">Processing</div>
<div class="t" style="left:2081.57px;top:800.00px;font-size:30.14px;line-height:30.14px;color:#222;transform:scaleX(0.9486);">Camera</div>
<div class="box" style="left:2082.2px;top:852.3px;width:457.4px;height:63.1px;border-radius:14px 0 0 14px;background:#f5f5f5"></div>
<div class="t" style="left:2102.96px;top:867.00px;font-size:31.01px;line-height:31.01px;color:#c0c0c0;transform:scaleX(0.9530);">Please select a camera template</div>
<div class="box" style="left:2082.2px;top:1355.7px;width:413.9px;height:12px;border-radius:6px;background:#8f8f8f"></div>
<div class="box" style="left:2081.5px;top:1388.7px;width:219.2px;height:94.7px;border-radius:10px;background:#fff;border:2px solid #e6e6e6"></div>
<div class="t" style="left:2138.60px;top:1422.00px;font-size:30.72px;line-height:30.72px;color:#222;transform:scaleX(0.9453);">Preview</div>
<div class="box" style="left:2321px;top:1388px;width:219.8px;height:95.4px;border-radius:10px;background:linear-gradient(90deg,#f7e14c,#f2c931)"></div>
<div class="t" style="left:2395.48px;top:1408.00px;font-size:29.71px;line-height:29.71px;color:#1a1a1a;transform:scaleX(0.9485);">Laser</div>
<div class="t" style="left:2363.28px;top:1436.00px;font-size:29.71px;line-height:29.71px;color:#1a1a1a;transform:scaleX(1.0431);">engraving</div>
</body></html>
